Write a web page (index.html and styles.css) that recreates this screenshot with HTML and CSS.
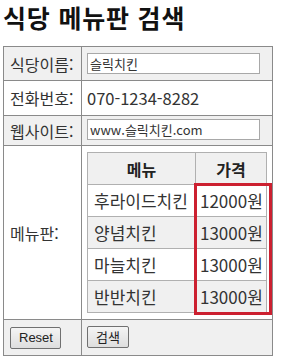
FILE: index.html
```html
<!DOCTYPE html>
<html lang="ko">
<head>
<meta charset="utf-8">
<link rel="stylesheet" href="styles.css">
</head>
<body>
<h1 class="title">식당 메뉴판 검색</h1>
<table class="form">
  <tr class="odd">
    <td class="label">식당이름:</td>
    <td class="value"><input class="field" type="text" value="슬릭치킨"></td>
  </tr>
  <tr class="even">
    <td class="label">전화번호:</td>
    <td class="value text">070-1234-8282</td>
  </tr>
  <tr class="odd">
    <td class="label">웹사이트:</td>
    <td class="value tight"><input class="field" type="text" value="www.슬릭치킨.com"></td>
  </tr>
  <tr class="even">
    <td class="label">메뉴판:</td>
    <td class="value">
      <div class="menu-wrap">
        <table class="menu">
          <tr class="odd"><th class="c1">메뉴</th><th class="c2">가격</th></tr>
          <tr class="even"><td class="c1">후라이드치킨</td><td class="c2">12000원</td></tr>
          <tr class="odd"><td class="c1">양념치킨</td><td class="c2">13000원</td></tr>
          <tr class="even"><td class="c1">마늘치킨</td><td class="c2">13000원</td></tr>
          <tr class="odd"><td class="c1">반반치킨</td><td class="c2">13000원</td></tr>
        </table>
        <div class="highlight"></div>
      </div>
    </td>
  </tr>
  <tr class="odd">
    <td class="label btn-cell"><button class="btn reset" type="button">Reset</button></td>
    <td class="value btn-cell"><button class="btn search" type="button">검색</button></td>
  </tr>
</table>
</body>
</html>
```

FILE: styles.css
```css
html, body {
  margin: 0;
  padding: 0;
  background: #fff;
}
body {
  padding: 0 3px;
  font-family: "Malgun Gothic", "Noto Sans CJK KR", "Noto Sans", sans-serif;
  color: #222;
}
.title {
  margin: 0;
  padding-top: 2px;
  height: 46px;
  box-sizing: border-box;
  font-size: 25px;
  font-weight: bold;
  line-height: 30px;
  color: #111;
  letter-spacing: 0.8px;
}
.form {
  border-collapse: collapse;
  width: 270px;
  border: 1px solid #8a8a8a;
  font-size: 16px;
  line-height: 20px;
}
.form > tbody > tr > td {
  border: 1px solid #8a8a8a;
  padding: 0;
}
.form tr.odd { background: #f0f0f0; }
.form tr.even { background: #fff; }
.label {
  width: 72px;
  padding-left: 6px !important;
  color: #333;
  white-space: nowrap;
}
.value {
  padding: 6px 5px 6px 5px !important;
}
.value.tight {
  padding: 3px 5px 5px 5px !important;
}
.value.text {
  padding: 7px 5px 7px 5px !important;
  font-size: 16.5px;
  color: #333;
}
.field {
  display: block;
  box-sizing: border-box;
  width: 173px;
  height: 21px;
  margin: 0;
  padding: 0 2px;
  border: 1px solid #a8a8a8;
  background: #fff;
  font-family: "Malgun Gothic", "Noto Sans CJK KR", sans-serif;
  font-size: 13px;
  color: #333;
}
.menu-wrap {
  position: relative;
}
.menu {
  border-collapse: collapse;
  width: 180px;
  border: 1px solid #8a8a8a;
  font-size: 17px;
  line-height: 20px;
}
.menu th, .menu td {
  border: 1px solid #b0b0b0;
  height: 32px;
  box-sizing: border-box;
  padding: 0 2px 0 6px;
  color: #333;
  white-space: nowrap;
}
.menu td.c2 {
  padding-left: 4px;
}
.menu th {
  font-weight: bold;
  text-align: center;
  color: #222;
  font-size: 16px;
  padding: 0;
}
.menu .c1 { width: 108px; }
.menu tr.odd { background: #f0f0f0; }
.menu tr.even { background: #fff; }
.highlight {
  position: absolute;
  left: 107px;
  top: 31px;
  width: 72px;
  height: 126px;
  border: 3px solid #cc2030;
}
.btn {
  font-family: "Malgun Gothic", "Noto Sans CJK KR", "Liberation Sans", sans-serif;
  font-size: 13px;
  line-height: 16px;
  height: 22px;
  padding: 0 8px;
  border: 1px solid #707070;
  border-radius: 2px;
  background: linear-gradient(#f4f4f4, #dedede);
  color: #222;
  display: block;
}
.label.btn-cell {
  padding: 6px 0 6px 6px !important;
}
.value.btn-cell {
  padding: 6px 5px 7px 5px !important;
}
.reset {
  width: 51px;
  font-family: "Liberation Sans", sans-serif;
}
.search {
  width: 42px;
}
```
